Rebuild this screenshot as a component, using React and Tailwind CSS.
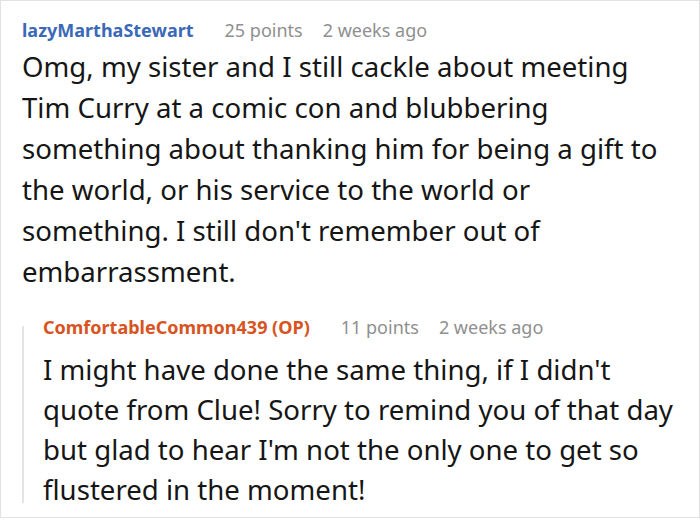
import React from 'react'

function Meta({ name, color, points, time }) {
  return (
    <div className="flex items-baseline text-[18px] leading-[24px]">
      <span className={`font-bold ${color}`}>{name}</span>
      <span className="ml-[31px] text-[#8f8f8f]">{points}</span>
      <span className="ml-[20px] text-[#8f8f8f]">{time}</span>
    </div>
  )
}

export default function App() {
  return (
    <div className="bg-white w-[700px] h-[520px] font-['Noto_Sans','Open_Sans',sans-serif]">
      <div className="h-[518px] border border-[#e2e2e2] pl-[21px] pt-[17px]">
        <Meta
          name="lazyMarthaStewart"
          color="text-[#3b69b8]"
          points="25 points"
          time="2 weeks ago"
        />
        <p className="mt-[4px] pr-[27px] text-[27.6px] leading-[41px] text-[#161616]">
          Omg, my sister and I still cackle about meeting Tim Curry at a comic con and blubbering something about thanking him for being a gift to the world, or his service to the world or something. I still don't remember out of embarrassment.
        </p>
        <div className="mt-[23px] flex">
          <div className="mt-[11px] mb-[6px] w-[2px] shrink-0 bg-[#e4e4e4]" />
          <div className="pl-[19px] pr-[10px]">
            <Meta
              name="ComfortableCommon439 (OP)"
              color="text-[#d8541f]"
              points="11 points"
              time="2 weeks ago"
            />
            <p className="mt-[10px] text-[27.6px] leading-[40px] text-[#161616]">
              I might have done the same thing, if I didn't quote from Clue! Sorry to remind you of that day but glad to hear I'm not the only one to get so flustered in the moment!
            </p>
          </div>
        </div>
      </div>
    </div>
  )
}
